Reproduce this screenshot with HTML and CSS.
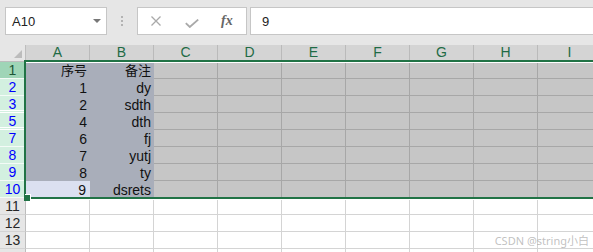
FILE: index.html
```html
<!DOCTYPE html>
<html>
<head>
<meta charset="utf-8">
<link rel="stylesheet" href="styles.css">
</head>
<body>
<div class="toolbar">
  <div class="namebox"><span>A10</span><span class="caret"></span></div>
  <div class="sep"><i></i><i></i><i></i></div>
  <div class="fbtns">
    <svg class="ic-x" width="10" height="10" viewBox="0 0 10 10"><path d="M0.5 0.5 L9.5 9.5 M9.5 0.5 L0.5 9.5" stroke="#a9a9a9" stroke-width="1.3" fill="none"/></svg>
    <svg class="ic-ok" width="14" height="9" viewBox="0 0 14 9"><path d="M0.8 4.2 L4.8 8 L13.2 0.6" stroke="#a9a9a9" stroke-width="1.8" fill="none"/></svg>
    <span class="fx">fx</span>
  </div>
  <div class="finput">9</div>
</div>
<div class="sheet">
  <div class="grid">
    <div class="corner"><span class="tri"></span></div>
    <div class="ch">A</div><div class="ch">B</div><div class="ch">C</div><div class="ch">D</div><div class="ch">E</div><div class="ch">F</div><div class="ch">G</div><div class="ch">H</div><div class="ch">I</div>

    <div class="rh a">1</div><div class="c ab cjk">序号</div><div class="c ab cjk">备注</div><div class="c sel"></div><div class="c sel"></div><div class="c sel"></div><div class="c sel"></div><div class="c sel"></div><div class="c sel"></div><div class="c sel"></div>
    <div class="rh s">2</div><div class="c ab">1</div><div class="c ab">dy</div><div class="c sel"></div><div class="c sel"></div><div class="c sel"></div><div class="c sel"></div><div class="c sel"></div><div class="c sel"></div><div class="c sel"></div>
    <div class="rh s h">3</div><div class="c ab">2</div><div class="c ab">sdth</div><div class="c sel"></div><div class="c sel"></div><div class="c sel"></div><div class="c sel"></div><div class="c sel"></div><div class="c sel"></div><div class="c sel"></div>
    <div class="rh s h">5</div><div class="c ab">4</div><div class="c ab">dth</div><div class="c sel"></div><div class="c sel"></div><div class="c sel"></div><div class="c sel"></div><div class="c sel"></div><div class="c sel"></div><div class="c sel"></div>
    <div class="rh s">7</div><div class="c ab">6</div><div class="c ab">fj</div><div class="c sel"></div><div class="c sel"></div><div class="c sel"></div><div class="c sel"></div><div class="c sel"></div><div class="c sel"></div><div class="c sel"></div>
    <div class="rh s">8</div><div class="c ab">7</div><div class="c ab">yutj</div><div class="c sel"></div><div class="c sel"></div><div class="c sel"></div><div class="c sel"></div><div class="c sel"></div><div class="c sel"></div><div class="c sel"></div>
    <div class="rh s">9</div><div class="c ab">8</div><div class="c ab">ty</div><div class="c sel"></div><div class="c sel"></div><div class="c sel"></div><div class="c sel"></div><div class="c sel"></div><div class="c sel"></div><div class="c sel"></div>
    <div class="rh s">10</div><div class="c act">9</div><div class="c ab">dsrets</div><div class="c sel"></div><div class="c sel"></div><div class="c sel"></div><div class="c sel"></div><div class="c sel"></div><div class="c sel"></div><div class="c sel"></div>

    <div class="rh">11</div><div class="c"></div><div class="c"></div><div class="c"></div><div class="c"></div><div class="c"></div><div class="c"></div><div class="c"></div><div class="c"></div><div class="c"></div>
    <div class="rh">12</div><div class="c"></div><div class="c"></div><div class="c"></div><div class="c"></div><div class="c"></div><div class="c"></div><div class="c"></div><div class="c"></div><div class="c"></div>
    <div class="rh">13</div><div class="c"></div><div class="c"></div><div class="c"></div><div class="c"></div><div class="c"></div><div class="c"></div><div class="c"></div><div class="c"></div><div class="c"></div>
    <div class="rh"></div><div class="c"></div><div class="c"></div><div class="c"></div><div class="c"></div><div class="c"></div><div class="c"></div><div class="c"></div><div class="c"></div><div class="c"></div>
  </div>
  <div class="selbox"><span class="handle"></span></div>
</div>
<div class="wm">CSDN @string小白</div>
</body>
</html>
```
FILE: styles.css
```css
html, body {
  margin: 0;
  padding: 0;
  width: 593px;
  height: 252px;
  overflow: hidden;
  background: #ffffff;
  font-family: "Liberation Sans", Arial, "Noto Sans CJK SC", sans-serif;
}
body { position: relative; }

.toolbar {
  height: 45px;
  box-sizing: border-box;
  background: #e6e6e6;
  display: flex;
  align-items: flex-start;
  padding: 7px 0 0 5px;
}
.namebox {
  width: 102px;
  height: 28px;
  box-sizing: border-box;
  border: 1px solid #c6c6c6;
  background: #fff;
  display: flex;
  align-items: center;
  justify-content: space-between;
  padding: 1px 5px 0 6px;
  font-size: 13px;
  color: #222;
}
.caret {
  width: 0;
  height: 0;
  border-left: 4px solid transparent;
  border-right: 4px solid transparent;
  border-top: 4px solid #777;
  margin-bottom: 1px;
}
.sep {
  width: 30px;
  height: 28px;
  display: flex;
  flex-direction: column;
  align-items: center;
  justify-content: center;
  gap: 2px;
}
.sep i {
  display: block;
  width: 2px;
  height: 2px;
  background: #b3b3b3;
}
.fbtns {
  width: 110px;
  height: 28px;
  box-sizing: border-box;
  border: 1px solid #c6c6c6;
  background: #fff;
  display: flex;
  align-items: center;
  padding-left: 13px;
}
.ic-ok { margin-left: 24px; margin-top: 4px; }
.fx {
  margin-left: 22px;
  font-family: "Liberation Serif", "Times New Roman", serif;
  font-style: italic;
  font-weight: bold;
  font-size: 14px;
  color: #666;
  margin-top: -1px;
}
.finput {
  flex: 1;
  height: 28px;
  box-sizing: border-box;
  margin-left: 3px;
  border: 1px solid #c6c6c6;
  border-right: none;
  background: #fff;
  padding: 6px 0 0 11px;
  font-size: 13px;
  line-height: 15px;
  color: #222;
}

.sheet { position: relative; }
.grid {
  display: grid;
  grid-template-columns: 26px repeat(9, 64px);
  grid-auto-rows: 17px;
}
.grid > div {
  box-sizing: border-box;
  white-space: nowrap;
}
.corner {
  background: #e6e6e6;
  border-right: 1px solid #bdbdbd;
  border-bottom: 1px solid #bdbdbd;
  position: relative;
}
.tri {
  position: absolute;
  right: 3px;
  bottom: 3px;
  width: 0;
  height: 0;
  border-left: 8px solid transparent;
  border-bottom: 8px solid #bcbcbc;
}
.ch {
  background: #d4d4d4;
  border-right: 1px solid #bababa;
  border-bottom: 1px solid #bababa;
  text-align: center;
  font-size: 14px;
  line-height: 14px;
  color: #1f6b45;
}
.rh {
  background: #e6e6e6;
  border-right: 1px solid #bdbdbd;
  border-bottom: 1px solid #d3d3d3;
  text-align: center;
  font-size: 14px;
  line-height: 14px;
  padding-top: 1px;
  color: #262626;
}
.rh.s {
  background: #d3f0e0;
  color: #0000ff;
  border-bottom-color: #f4fbf7;
}
.rh.h {
  border-bottom: 3px double #ffffff;
  background: #d3f0e0;
}
.rh.a {
  background: #9fd5b7;
  color: #1d5636;
  border-bottom-color: #f4fbf7;
}
.c {
  border-right: 1px solid #d4d4d4;
  border-bottom: 1px solid #d4d4d4;
  font-size: 14px;
  line-height: 14px;
  padding: 2px 2px 0 0;
  text-align: right;
  color: #111;
}
.c.cjk {
  font-family: "Noto Sans CJK SC", sans-serif;
  font-size: 13px;
  line-height: 15px;
  padding-top: 0;
}
.c.ab { background: #a9aeba; border-color: #a9aeba; }
.c.act { background: #dbe0f0; border-color: #dbe0f0; padding-right: 3px; }
.c.sel { background: #c6c6c6; border-color: #a7a7a7; }

.selbox {
  position: absolute;
  left: 24px;
  top: 15px;
  width: 600px;
  height: 139px;
  box-sizing: border-box;
  border: 2px solid #217346;
  box-shadow: 0 1px 0 #ffffff, inset 0 1px 0 #ffffff;
}
.handle {
  position: absolute;
  left: -2px;
  bottom: -4px;
  width: 6px;
  height: 6px;
  background: #217346;
  box-shadow: 1px -1px 0 #ffffff;
}
.wm {
  position: absolute;
  right: 4px;
  top: 234px;
  white-space: nowrap;
  font-family: "Noto Sans", "Noto Sans CJK SC", sans-serif;
  font-size: 11px;
  line-height: 14px;
  color: rgba(150, 150, 150, 0.6);
}
```
